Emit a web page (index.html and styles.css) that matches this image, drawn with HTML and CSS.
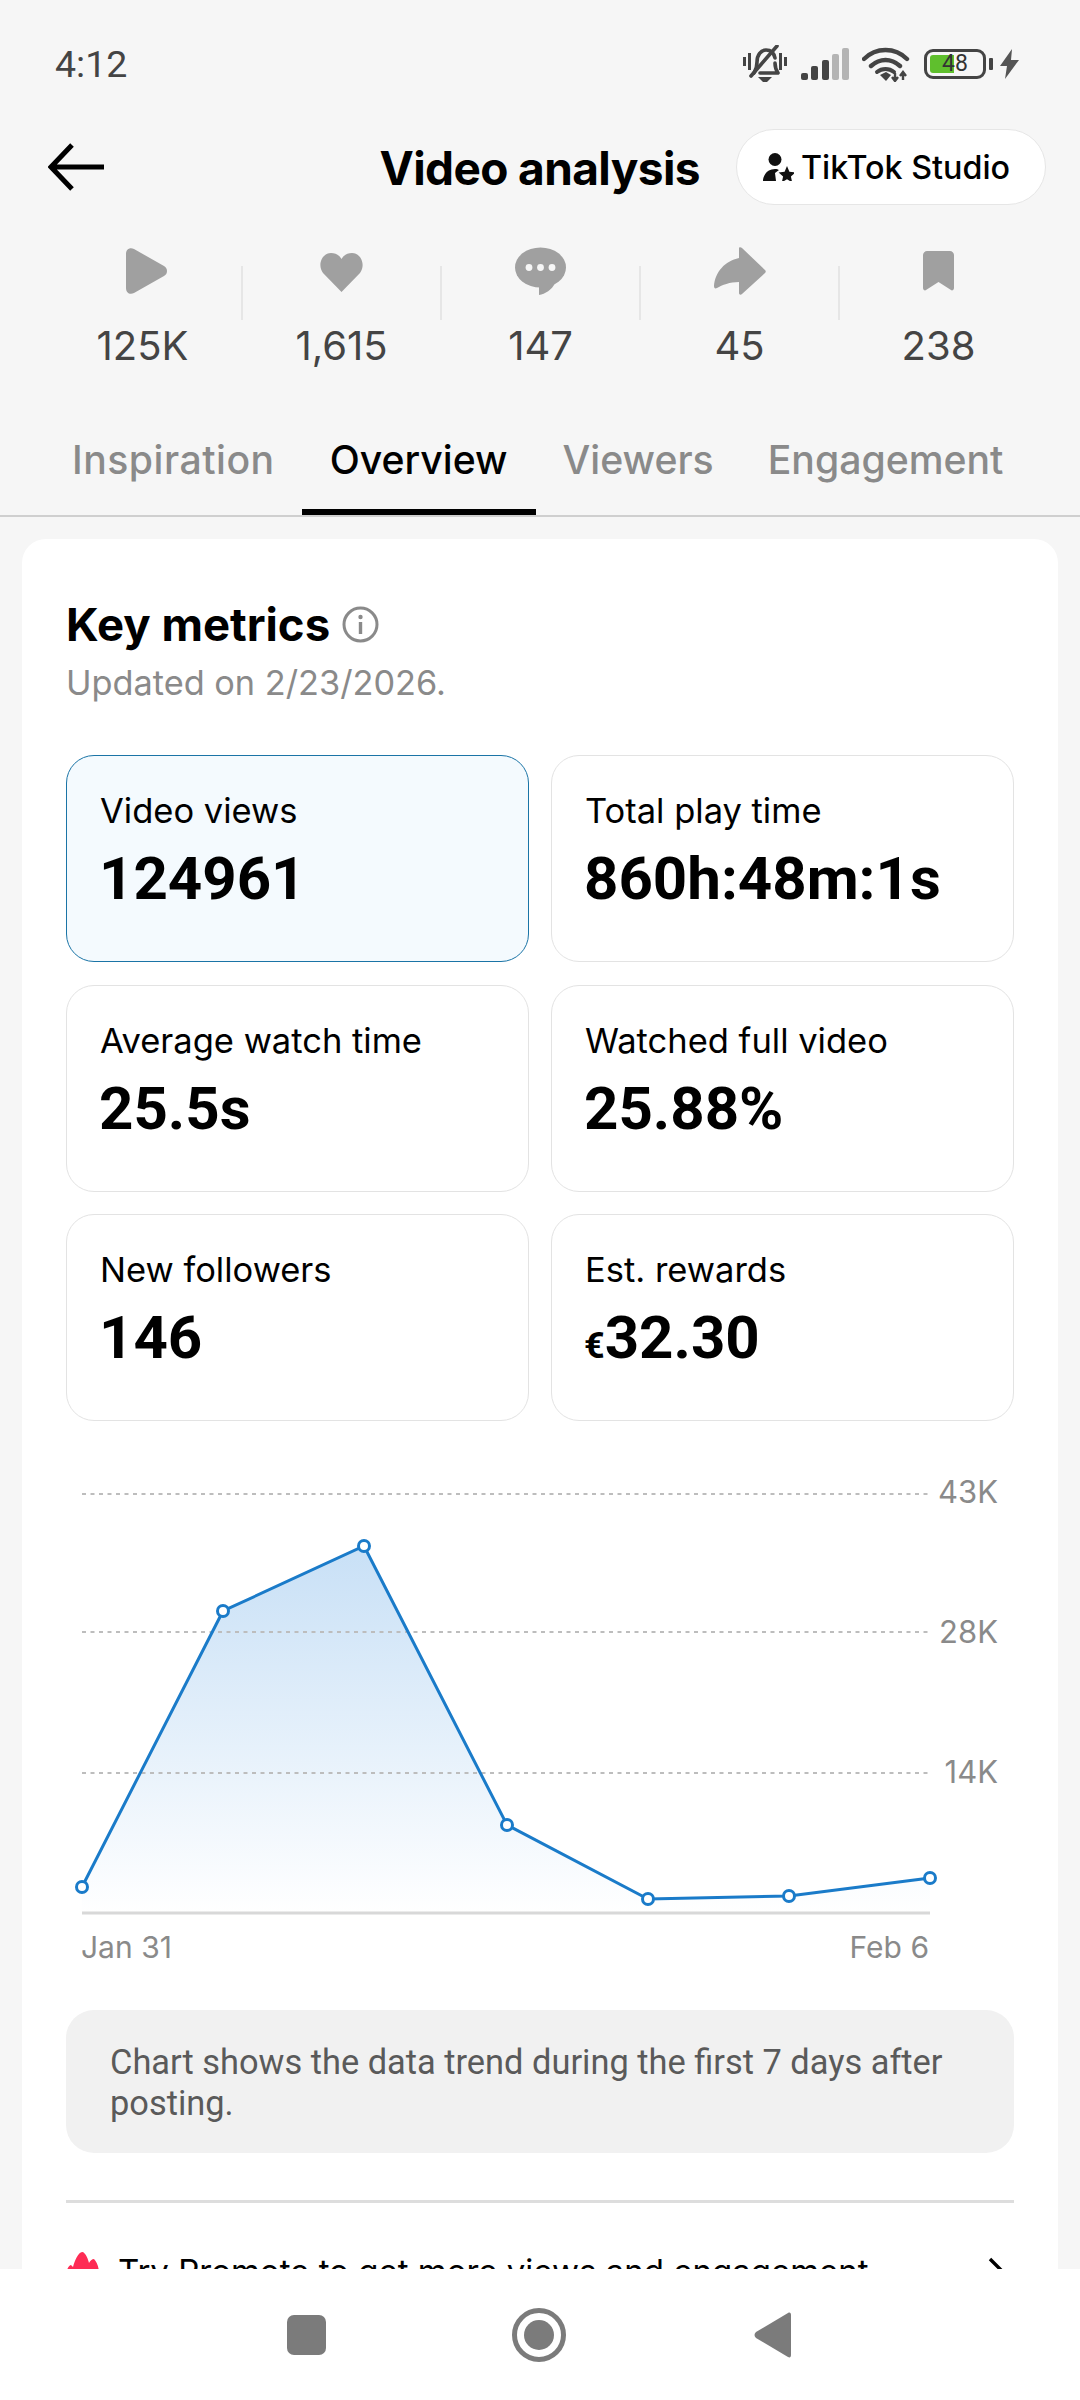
FILE: index.html
```html
<!DOCTYPE html>
<html lang="en">
<head>
  <title>Video analysis</title>
  <link rel="stylesheet" href="styles.css">
</head>
<body>
  <div class="app">
    <div class="screen">
      <div class="status-bar">
        <span class="clock">4:12</span>
        <div class="status-icons">
          <svg class="ic-bell" width="44" height="38" viewBox="0 0 44 38">
            <path d="M1.5 12v9M6.5 8v17M37.5 8v17M42.5 12v9" stroke="#444" stroke-width="3" fill="none"/>
            <path d="M11 28c2-3 3-6 3-11 0-7 4-12 9-12s8 3 9 8M32 18c0 5 1 7 3 10H17" stroke="#444" stroke-width="3.6" fill="none" stroke-linecap="round" stroke-linejoin="round"/>
            <path d="M15 32h14l-5 5h-4z" fill="#444"/>
            <path d="M8 31 34 1" stroke="#444" stroke-width="3.6" stroke-linecap="round"/>
          </svg>
          <svg class="ic-signal" width="48" height="32" viewBox="0 0 48 32">
            <rect x="0" y="25" width="7" height="7" rx="2" fill="#444"/>
            <rect x="10" y="18" width="7" height="14" rx="2" fill="#444"/>
            <rect x="21" y="12" width="7" height="20" rx="2" fill="#444"/>
            <rect x="31" y="6" width="7" height="26" rx="2" fill="#b4b4b4"/>
            <rect x="41" y="0" width="7" height="32" rx="2" fill="#b4b4b4"/>
          </svg>
          <svg class="ic-wifi" width="48" height="35" viewBox="0 0 48 35">
            <path d="M2 12C14 0 33 0 45 12M9 19c9-8 20-8 29 0" stroke="#444" stroke-width="4.4" fill="none" stroke-linecap="round"/>
            <path d="M15 25c5-4 12-4 17 0" stroke="#444" stroke-width="4" fill="none" stroke-linecap="round"/>
            <path d="M18 28l6-3 5 3-5 6z" fill="#444"/>
            <path d="M33 26v7M30 30l3 4 3-4M41 33v-7M38 29l3-4 3 4" stroke="#444" stroke-width="2.4" fill="none"/>
          </svg>
          <div class="battery">
            <div class="battery-fill"></div>
            <span class="battery-num">48</span>
            <div class="battery-tip"></div>
          </div>
          <svg class="ic-bolt" width="19" height="30" viewBox="0 0 19 30"><path d="M12 0 0 17h7L5 30 19 11h-8z" fill="#555"/></svg>
        </div>
      </div>

      <div class="top-bar">
        <svg class="back" width="58" height="48" viewBox="0 0 58 48">
          <path d="M24 2 3 24l21 22M3 24h53" stroke="#000" stroke-width="5" fill="none"/>
        </svg>
        <h1 class="title">Video analysis</h1>
        <div class="studio-btn">
          <svg width="31" height="28" viewBox="0 0 31 28">
            <circle cx="12" cy="6.5" r="6.5" fill="#111"/>
            <path d="M0 28c0-3 2-12 12-12 2 0 3 .5 4 1l-4 3 1 8z" fill="#111"/>
            <path d="M24 13l2.400 5.800 6 .6-4.500 4 1.300 6-5.200-3.200-5.200 3.200 1.300-6-4.500-4 6-.6z" fill="#111"/>
          </svg>
          <span>TikTok Studio</span>
        </div>
      </div>

      <div class="stats">
        <div class="stat">
          <svg class="ic-play" width="41" height="48" viewBox="0 0 41 48"><path d="M0 7c0-5 4-7 8-5l30 17c4 2 4 8 0 10L8 46c-4 2-8 0-8-5z" fill="#a0a0a0"/></svg>
          <span>125K</span>
        </div>
        <div class="stat">
          <svg width="43" height="48" viewBox="0 0 43 48"><path d="M21.500 45 3 26C-3 18 2 6 11 6c5 0 8.500 2.500 10.500 6C23.500 8.500 27 6 32 6c9 0 14 12 8 20z" fill="#a0a0a0"/></svg>
          <span>1,615</span>
        </div>
        <div class="stat">
          <svg width="51" height="48" viewBox="0 0 51 48">
            <ellipse cx="25.500" cy="20.500" rx="25.500" ry="20" fill="#a0a0a0"/>
            <path d="M24 37v11c6-1 13-5 16-12z" fill="#a0a0a0"/>
            <circle cx="14" cy="20.500" r="3.400" fill="#f6f6f6"/><circle cx="25.500" cy="20.500" r="3.400" fill="#f6f6f6"/><circle cx="37" cy="20.500" r="3.400" fill="#f6f6f6"/>
          </svg>
          <span>147</span>
        </div>
        <div class="stat">
          <svg width="52" height="48" viewBox="0 0 52 48"><path d="M25 1c0-1 2-1 3 0l23 22c1 1 1 2 0 3L28 47c-1 1-3 1-3-1V35C16 35 8 38 3 41c-2 1-3 0-3-2C1 25 11 14 25 11z" fill="#a0a0a0"/></svg>
          <span>45</span>
        </div>
        <div class="stat">
          <svg width="31" height="48" viewBox="0 0 31 48"><path d="M4 4h23c2 0 4 2 4 4v33c0 2-2 3-3 2L15.500 35 3 43c-1 1-3 0-3-2V8c0-2 2-4 4-4z" fill="#a0a0a0"/></svg>
          <span>238</span>
        </div>
      </div>

      <div class="tabs">
        <div class="tab">Inspiration</div>
        <div class="tab tab-on">Overview</div>
        <div class="tab">Viewers</div>
        <div class="tab">Engagement</div>
      </div>

      <div class="card">
        <div class="card-head">
          <h2>Key metrics</h2>
          <svg width="37" height="37" viewBox="0 0 37 37">
            <circle cx="18.500" cy="18.500" r="16.500" fill="none" stroke="#8a8a8a" stroke-width="3"/>
            <circle cx="18.500" cy="11" r="2.200" fill="#8a8a8a"/>
            <rect x="16.800" y="16" width="3.400" height="12" fill="#8a8a8a"/>
          </svg>
        </div>
        <p class="updated">Updated on 2/23/2026.</p>

        <div class="metrics">
          <div class="metric metric-on">
            <div class="metric-label">Video views</div>
            <div class="metric-value">124961</div>
          </div>
          <div class="metric">
            <div class="metric-label">Total play time</div>
            <div class="metric-value">860h:48m:1s</div>
          </div>
          <div class="metric">
            <div class="metric-label">Average watch time</div>
            <div class="metric-value">25.5s</div>
          </div>
          <div class="metric">
            <div class="metric-label">Watched full video</div>
            <div class="metric-value">25.88%</div>
          </div>
          <div class="metric">
            <div class="metric-label">New followers</div>
            <div class="metric-value">146</div>
          </div>
          <div class="metric">
            <div class="metric-label">Est. rewards</div>
            <div class="metric-value"><small>€</small>32.30</div>
          </div>
        </div>

        <svg class="chart" width="1036" height="510" viewBox="22 1470 1036 510">
          <defs>
            <linearGradient id="area" x1="0" y1="0" x2="0" y2="1">
              <stop offset="0" stop-color="#c8e0f6"/>
              <stop offset="1" stop-color="#ffffff"/>
            </linearGradient>
          </defs>
          <path d="M82 1886 223 1610 364 1545 507 1824 648 1898 789 1895 930 1877V1913H82z" fill="url(#area)"/>
          <g stroke="#bdbdbd" stroke-width="2" stroke-dasharray="4 4.500">
            <path d="M82 1493H930"/>
            <path d="M82 1631H930"/>
            <path d="M82 1772H930"/>
          </g>
          <path d="M82 1912H930" stroke="#d8d8d8" stroke-width="3"/>
          <path d="M82 1886 223 1610 364 1545 507 1824 648 1898 789 1895 930 1877" fill="none" stroke="#1a7bc9" stroke-width="3"/>
          <g fill="#fff" stroke="#1a7bc9" stroke-width="3">
            <circle cx="82" cy="1886" r="5.500"/>
            <circle cx="223" cy="1610" r="5.500"/>
            <circle cx="364" cy="1545" r="5.500"/>
            <circle cx="507" cy="1824" r="5.500"/>
            <circle cx="648" cy="1898" r="5.500"/>
            <circle cx="789" cy="1895" r="5.500"/>
            <circle cx="930" cy="1877" r="5.500"/>
          </g>
          <g class="chart-y">
            <text x="998" y="1502" text-anchor="end">43K</text>
            <text x="998" y="1642" text-anchor="end">28K</text>
            <text x="998" y="1782" text-anchor="end">14K</text>
          </g>
          <g class="chart-x">
            <text x="81" y="1957">Jan 31</text>
            <text x="929" y="1957" text-anchor="end">Feb 6</text>
          </g>
        </svg>

        <div class="note">Chart shows the data trend during the first 7 days after posting.</div>

        <div class="promote">
          <svg width="34" height="40" viewBox="0 0 34 40">
            <path d="M1 40V18c1-3 3-5 4-5l2 2C9 8 12 0 17 0c3 2 5 7 6 11 1-2 3-4 5-4 3 3 5 9 5 14v19z" fill="#fe2c55"/>
          </svg>
          <span class="promote-text">Try Promote to get more views and engagement</span>
          <svg class="promote-go" width="18" height="32" viewBox="0 0 18 32"><path d="M2 2l14 14L2 30" stroke="#000" stroke-width="3.400" fill="none"/></svg>
        </div>
      </div>
    </div>

    <div class="nav-bar">
      <div class="nav-square"></div>
      <svg width="56" height="56" viewBox="0 0 56 56">
        <circle cx="28" cy="28" r="24.500" fill="none" stroke="#7b7b7b" stroke-width="5"/>
        <circle cx="28" cy="28" r="15" fill="#7b7b7b"/>
      </svg>
      <svg width="38" height="46" viewBox="0 0 38 46"><path d="M34 1c2-1 3 0 3 2v40c0 2-1 3-3 2L2 26c-2-2-2-4 0-6z" fill="#7b7b7b"/></svg>
    </div>
  </div>
</body>
</html>
```

FILE: styles.css
```css
*{
  padding: 0;
  margin: 0;
  box-sizing: border-box;
}
body{
  background: #f6f6f6;
  font-family: "Inter", "Roboto", sans-serif;
  color: #000;
}
.app{
  width: 1080px;
  height: 2400px;
  display: flex;
  flex-direction: column;
  overflow: hidden;
}
.screen{
  flex: 1;
  min-height: 0;
  overflow: hidden;
}

/* status bar */
.status-bar{
  height: 129px;
  padding: 45px 61px 0 55px;
  display: flex;
  justify-content: space-between;
  align-items: flex-start;
}
.clock{
  font-family: "Roboto", sans-serif;
  font-size: 37.5px;
  line-height: 38px;
  color: #444;
}
.status-icons{
  display: flex;
  align-items: center;
  height: 38px;
}
.ic-signal{
  margin-left: 14px;
}
.ic-wifi{
  margin-left: 13px;
}
.battery{
  position: relative;
  width: 62px;
  height: 30px;
  margin-left: 14px;
  border: 3px solid #444;
  border-radius: 9px;
  display: flex;
  justify-content: center;
  align-items: center;
}
.battery-fill{
  position: absolute;
  left: 3px;
  top: 3px;
  bottom: 3px;
  width: 24px;
  background: #5fbf2d;
  border-radius: 3px 0 0 3px;
}
.battery-num{
  position: relative;
  font-family: "Roboto", sans-serif;
  font-size: 23px;
  line-height: 24px;
  color: #333;
}
.battery-tip{
  position: absolute;
  right: -10px;
  top: 6px;
  width: 4px;
  height: 12px;
  background: #444;
  border-radius: 1px;
}
.ic-bolt{
  margin-left: 14px;
}

/* header */
.top-bar{
  height: 76px;
  padding: 0 34px 0 48px;
  display: flex;
  align-items: center;
}
.title{
  margin-left: auto;
  padding-top: 2px;
  font-size: 46px;
  font-weight: 700;
  letter-spacing: -0.6px;
}
.studio-btn{
  margin-left: 36px;
  width: 310px;
  height: 76px;
  background: #fff;
  border: 1px solid #e6e6e6;
  border-radius: 38px;
  display: flex;
  align-items: center;
  padding-left: 26px;
  gap: 7px;
  font-size: 32.3px;
  font-weight: 500;
}

/* play, like, comment... */
.stats{
  margin-top: 42px;
  padding: 0 43px;
  display: grid;
  grid-template-columns: repeat(5, 199px);
}
.stat{
  position: relative;
  height: 123px;
  display: flex;
  flex-direction: column;
  align-items: center;
  font-size: 40px;
  color: #444;
}
.stat svg{
  flex: none;
}
.stat .ic-play{
  margin-left: 8px;
}
.stat span{
  margin-top: 28px;
  line-height: 46px;
}
.stat + .stat::before{
  content: "";
  position: absolute;
  left: -1px;
  top: 19px;
  height: 54px;
  border-left: 2px solid #e6e6e6;
}

.tabs{
  margin-top: 62px;
  padding-left: 43px;
  height: 85px;
  display: flex;
  border-bottom: 2px solid #cfcfcf;
}
.tab{
  padding: 4px 27px 0;
  font-size: 39.2px;
  line-height: 48px;
  font-weight: 500;
  color: #8a8a8a;
}
.tab:first-child{
  padding-left: 29px;
  letter-spacing: 0.5px;
}
.tab-on{
  padding: 4px 28px 0;
  color: #000;
  border-bottom: 6px solid #000;
}

/* white card */
.card{
  margin: 22px 22px 0;
  padding: 57px 44px 0;
  background: #fff;
  border-radius: 24px 24px 0 0;
}
.card-head{
  display: flex;
  align-items: center;
  gap: 12px;
  height: 56px;
}
.card-head h2{
  font-size: 45.5px;
  font-weight: 700;
}
.updated{
  margin-top: 9px;
  font-size: 34.3px;
  line-height: 44px;
  color: #8a8a8a;
}
.metrics{
  margin-top: 50px;
  display: grid;
  grid-template-columns: 463px 463px;
  grid-auto-rows: 207px;
  gap: 22.5px 22px;
}
.metric{
  border: 1px solid #e3e3e3;
  border-radius: 28px;
  padding: 34px 33px 0;
}
.metric-on{
  background: #f4fafe;
  border: 1.5px solid #1a74a6;
}
.metric-label{
  font-size: 34.5px;
  line-height: 42px;
}
.metric-value{
  margin: 9px 0 0 -1px;
  font-family: "Roboto", sans-serif;
  font-size: 60px;
  line-height: 76px;
  font-weight: 700;
}
.metric-value small{
  font-size: 36px;
}

.chart{
  display: block;
  margin: 50px 0 0 -44px;
}
.chart-y{
  font-size: 31px;
  fill: #8a8a8a;
}
.chart-x{
  font-size: 30px;
  fill: #8a8a8a;
}

.note{
  margin-top: 29px;
  height: 143px;
  padding: 32px 44px 0;
  background: #f1f1f1;
  border-radius: 28px;
  font-family: "Roboto", sans-serif;
  font-size: 34.4px;
  line-height: 41px;
  color: #5a5a5a;
}
.promote{
  margin-top: 47px;
  padding-top: 49px;
  border-top: 3px solid #ddd;
  display: flex;
  align-items: flex-start;
  gap: 18px;
  font-size: 33px;
  line-height: 44px;
}
.promote-text{
  margin-top: -3px;
}
.promote-go{
  margin: 5px 8px 0 auto;
}

/* android nav */
.nav-bar{
  height: 131px;
  background: #fff;
  display: flex;
  align-items: center;
  padding-left: 287px;
}
.nav-square{
  width: 39px;
  height: 40px;
  background: #7b7b7b;
  border-radius: 7px;
  margin-right: 185px;
}
.nav-bar svg:last-child{
  margin-left: 187px;
}
```
